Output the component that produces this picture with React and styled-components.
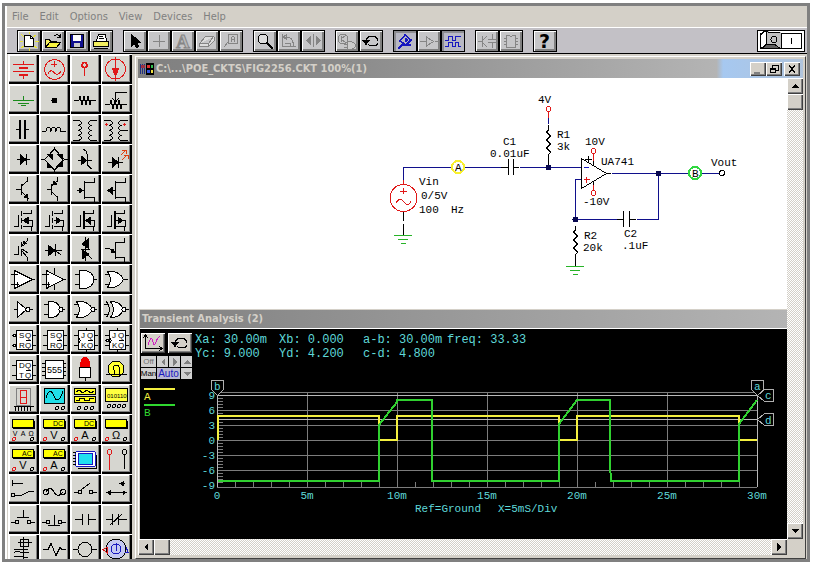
import React from "react";
import styled, { createGlobalStyle, css } from "styled-components";

const colors = {
    face: "#d4d0c8",
    tool: "#c3c1c6",
    dark: "#808080",
    red: "#e01818",
    green: "#1c8c1c",
    wire: "#10108c",
    blue: "#1818c0",
    cyan: "#5fd8d8",
    yellow: "#f4f040",
};

const fonts = {
    ui: `"DejaVu Sans Condensed", "DejaVu Sans", sans-serif`,
    mono: `"Liberation Mono", monospace`,
    small: `"Liberation Sans", sans-serif`,
};

const zig = "l1 -4l2 8l2 -8l2 8l2 -8l2 8l1 -4";

const T = ({ x, y, children, size = 8 }) => (
    <text x={x} y={y} fontSize={size} fill="#000" stroke="none">
        {children}
    </text>
);

const Solid = ({ d, c = "#000" }) => <path d={d} fill={c} stroke={c} />;

const JFet = ({ arrow }) => (
    <>
        <path d="M14.5 7v18M14.5 8.5h10v-5M14.5 23.5h10v4M7 16.5h7" />
        <Solid d={arrow} />
    </>
);

const Mosfet = ({ thick, arrow }) => (
    <>
        <path d="M6 22.5h4.500v-12M14.500 9.500h9v-4M14.500 22.500h9v4M15 16.500h9v6" />
        <path d={thick ? "M14 7v18" : "M13.500 7v5M13.500 14v5M13.500 21v4"} strokeWidth={thick ? 2 : 1} />
        <Solid d={arrow} />
    </>
);

const FlipFlop = ({ a, b, clock, inv }) => (
    <>
        <path d="M4 11.500h4M4 21.500h4M24 11.500h4M24 21.500h4" />
        <rect x="8.500" y="6.500" width="16" height="19" fill="#fff" />
        {clock && <path d="M8.500 14l2 2.500l-2 2.500M16.500 4v2M16.500 26v2" />}
        {inv && <circle cx="6.500" cy={clock ? 16.5 : 11.5} r="1.500" fill="#fff" />}
        {inv && !clock && <circle cx="6.500" cy="21.500" r="1.500" fill="#fff" />}
        <T x="11" y="14">{a}</T>
        <T x="17" y="14">Q</T>
        <T x="11" y="24">{b}</T>
        <T x="17" y="24">Q</T>
        <path d="M18 16.500h5" />
    </>
);

const Meter = ({ mode, units }) => (
    <>
        <rect x="4.500" y="5.500" width="21" height="8" fill="#ffff00" />
        <path d="M5 14.500h21.500v-8" />
        {mode && <T x="14" y="12" size="7">{mode}</T>}
        {units.map((u, i) => (
            <text
                key={u}
                x={units.length > 1 ? 7 + i * 8 : 15}
                y={units.length > 1 ? 22 : 25}
                fontSize={units.length > 1 ? 7 : 11}
                textAnchor="middle"
                fill="#000"
                stroke="none"
            >
                {u}
            </text>
        ))}
        <circle cx="6" cy="25" r="1.500" stroke={colors.red} />
        <circle cx="24" cy="25" r="1.500" />
    </>
);

const andBody = "M9.500 6.500h5q9 1 9 9t-9 9h-5z";
const orBody = "M6.500 7.500h5q8 1 11 8q-3 7 -11 8h-5q6 -8 0 -16z";

const parts = [
    ["Battery", <g stroke={colors.red}><path d="M15.500 7v3M5 10.500h21M5 17.500h21M15.500 22v3" /><path d="M11 14h9M11 21h9" strokeWidth="2" /></g>],
    ["AC source", <g stroke={colors.red}><circle cx="15.500" cy="15.500" r="10" /><path d="M12 10.500h6M15.500 7v6M9 19.500q3 -5 6 -1t7 -1" /></g>],
    ["Test pin", <g stroke={colors.red} strokeWidth="1.500"><circle cx="14.500" cy="11" r="2.500" /><path d="M14.500 13v9" /></g>],
    ["Current source", <g stroke={colors.red}><circle cx="14.500" cy="15" r="10" /><path d="M14.500 3v24" /><Solid d="M11 14h7l-3.500 8z" c={colors.red} /></g>],

    ["Ground", <path stroke={colors.green} d="M15.500 12v4M5 16.500h21M10 19.500h11M13 21.500h5" />],
    ["Node", <circle cx="15.500" cy="16.500" r="2.500" fill="#000" />],
    ["Resistor", <path d={`M4 16.500h5${zig}h5`} />],
    ["Potentiometer", <path d={`M4 20.500h5${zig}h5M26 8.500h-11.500v9M11 14l3.500 4l3.500 -4`} />],

    ["Capacitor", <><path d="M8 15.500h3M18 15.500h3" /><path d="M12 6v19M17 6v19" strokeWidth="2" /></>],
    ["Inductor", <path d="M3 17.500h4q0 -4 2.500 -4t2.500 4q0 -4 2.500 -4t2.500 4q0 -4 2.500 -4t2.500 4h5" />],
    ["Transformer", <path d="M3 6.500h6q5 2 0 5q5 2 0 5q5 2 0 5q5 2 0 5h-6M27 6.500h-6q-5 2 0 5q-5 2 0 5q-5 2 0 5q-5 2 0 5h6" />],
    ["Center tap transformer", <><path d="M3 6.500h6q5 2 0 5q5 2 0 5q5 2 0 5q5 2 0 5h-6M27 6.500h-7q-5 2 0 5q-5 2 0 5h7h-7q-5 2 0 5q-5 2 0 5h7" /><path stroke={colors.red} d="M4 10.500h3M5.500 9v3M22 10.500h3M23.500 9v3" /></>],

    ["Diode", <><path d="M9 15.500h13M18.500 10v11" /><Solid d="M12 10.500l6 5l-6 5z" /></>],
    ["Bridge", <><path d="M15.500 5l10 10.500l-10 10.500l-10 -10.500zM15.500 3v3M15.500 25v3M2 15.500h4M25 15.500h4" /><Solid d="M8 10l5 0l0 5zM18 10l5 0l0 5zM8 18l5 5l-5 0zM18 22l5 -5l0 5z" /></>],
    ["Zener diode", <><path d="M8 16.500h14M13 5q4 2 4 5v12M17.500 21l4 4" /><Solid d="M11 12l6 4.500l-6 4.500z" /></>],
    ["LED", <><path d="M7 18.500h15M17.500 13v11" /><Solid d="M11 13l6 5.500l-6 5z" /><path stroke="#e04010" d="M20 11l5 -5M21 6h4v4M21 16l5 -5M23 11h4v4" /></>],

    ["NPN transistor", <><path d="M8 15.500h5M13.500 10v11M13.500 12l6 -5v-4M13.500 18l6 5v4" /><Solid d="M20 24l-4 -1l3 -3z" /></>],
    ["PNP transistor", <><path d="M8 15.500h5M12.500 10v11M12.500 12l6 -5v-4M12.500 18l6 5v4" /><Solid d="M14 11l1 -4l3 3z" /></>],
    ["N JFET", <JFet arrow="M9 14l4 2.500l-4 2.500z" />],
    ["P JFET", <JFet arrow="M11 13.500l-4 3l4 3z" />],

    ["N MOSFET", <Mosfet arrow="M20 13.500l-5 3l5 3z" />],
    ["P MOSFET", <Mosfet arrow="M17 13.500l5 3l-5 3z" />],
    ["Depletion N MOSFET", <Mosfet thick arrow="M20 13.500l-4 3l4 3z" />],
    ["Depletion P MOSFET", <Mosfet thick arrow="M17 13.500l5 3l-5 3z" />],

    ["IGBT", <><path d="M6 20.500h4v-9M13.500 8v5M13.500 15v7M14 11l5 -4v-3M14 17l5 6v4M19 9l-5 3M14 15l6 4" /><Solid d="M15 10l1 -3l2 2z" /></>],
    ["SCR", <><path d="M6 16.500h17M16.500 10v12M17 17l5 4" /><Solid d="M9 11l7 5.500l-7 5.500z" /></>],
    ["Triac", <><path d="M11 15.500h9M15.500 3v24M17 20l5 5" /><Solid d="M18 5v9l-6 -4zM12 16v9l7 -5z" /></>],
    ["UJT", <><path d="M14.500 8v17M14.500 8.500h9v-5M14.500 23.500h9v4M4 14h4l6 5" /><Solid d="M14 19l-4 -1l2 -3z" /></>],

    ["Op amp", <><path d="M6.500 6.500v18l18 -9z" fill="#fff" /><path d="M3 10.500h7M3 20.500h8M9.500 18v5M24 15.500h3" /></>],
    ["Powered op amp", <><path d="M7.500 6.500v18l17 -9z" fill="#fff" /><path d="M3 10.500h7M3 20.500h8M9.500 18v5M24 15.500h3M15.500 4v6M15.500 20v6" /></>],
    ["AND", <><path d="M5 10.500h5M5 20.500h5M23 15.500h4" /><path d={andBody} fill="#fff" /></>],
    ["OR", <><path d={orBody} fill="#fff" /><path d="M4 10.500h5M4 20.500h5M22 15.500h5" /></>],

    ["Inverter", <><path d="M6 15.500h3M21 15.500h4" /><path d="M9.500 7.500v16l9 -8z" fill="#fff" /><circle cx="20" cy="15.500" r="2" fill="#fff" /></>],
    ["NAND", <><path d="M5 10.500h5M5 20.500h5M23 15.500h3" /><path d="M9.500 7.500h4q7 1 7 8t-7 8h-4z" fill="#fff" /><circle cx="22" cy="15.500" r="2" fill="#fff" /></>],
    ["NOR", <><path d={orBody} fill="#fff" /><path d="M4 10.500h5M4 20.500h5M24 15.500h3" /><circle cx="23" cy="15.500" r="2" fill="#fff" /></>],
    ["XNOR", <><path d="M5.500 7.500q6 8 0 16" /><path d="M9.500 7.500h3q7 1 10 8q-3 7 -10 8h-3q6 -8 0 -16z" fill="#fff" /><path d="M3 10.500h5M3 20.500h5M24 15.500h4" /><circle cx="23" cy="15.500" r="2" fill="#fff" /></>],

    ["SR flip flop inverted", <FlipFlop a="S" b="R" inv />],
    ["SR flip flop", <FlipFlop a="S" b="R" />],
    ["JK flip flop", <FlipFlop a="J" b="K" clock />],
    ["JK flip flop inverted", <FlipFlop a="J" b="K" clock inv />],

    ["D flip flop", <FlipFlop a="D" b="T" />],
    ["555 timer", <><path d="M3 9.500h24M3 13.500h24M3 17.500h24M3 21.500h24" /><rect x="6.500" y="6.500" width="18" height="18" fill="#fff" /><T x="8" y="19" size="9">555</T></>],
    ["Lamp", <><path d="M10.500 13q0 -9 4.500 -10q5 1 5 10z" fill="#f00000" stroke="#f00000" /><rect x="9.500" y="13.500" width="11" height="10" fill="#fff" /><path d="M15.500 24v3" /></>],
    ["Bulb", <><circle cx="15" cy="15" r="8" fill="#ffff30" /><path d="M5 20.500h21M13 20v-4q-2 -5 2 -5t3 5v4" /></>],

    ["Seven segment", <><rect x="8.500" y="4.500" width="14" height="17" stroke={colors.dark} /><path stroke={colors.red} d="M12.500 6.500h6v13h-6zM12.500 13h6" /><path d="M6 22.500h20M7.500 23v4M10.500 23v4M13.500 23v4M16.500 23v4M19.500 23v4M22.500 23v4" /></>],
    ["Oscilloscope", <><rect x="5.500" y="4.500" width="20" height="15" fill="#20e0e8" /><path d="M7 14q4 -12 8 -2t9 -5" /><circle cx="18" cy="24" r="1.500" /><circle cx="24" cy="24" r="1.500" /></>],
    ["Function generator", <><rect x="4.500" y="4.500" width="21" height="6" fill="#ffff20" /><rect x="4.500" y="12.500" width="21" height="6" fill="#ffff20" /><path d="M6 8l3 -2l4 3l4 -3l4 3l3 -2M6 16.500h3v-2h5v2h5v-2h5" /><circle cx="9" cy="24" r="1.500" /><circle cx="16" cy="24" r="1.500" /><circle cx="22" cy="24" r="1.500" /></>],
    ["Data sequencer", <><rect x="4.500" y="4.500" width="22" height="13" fill="#ffff40" /><T x="6" y="14" size="6">010110</T><circle cx="8" cy="22" r="1.500" /><circle cx="13" cy="22" r="1.500" /><circle cx="18" cy="22" r="1.500" /><circle cx="23" cy="22" r="1.500" /></>],

    ["Multimeter", <Meter units={["V", "A", "Ω"]} />],
    ["DC voltmeter", <Meter mode="DC" units={["V"]} />],
    ["DC ammeter", <Meter mode="DC" units={["A"]} />],
    ["Ohmmeter", <Meter units={["Ω"]} />],

    ["AC voltmeter", <Meter mode="AC" units={["V"]} />],
    ["AC ammeter", <Meter mode="AC" units={["A"]} />],
    ["Display", <><rect x="5.500" y="7.500" width="20" height="15" rx="2" fill="#fff" stroke={colors.blue} /><rect x="8.500" y="9.500" width="14" height="11" fill="#20e0f0" stroke={colors.blue} /><path d="M8 24.500h18v-14M3 8.500h3M3 11.500h3M3 14.500h3M3 17.500h3M3 20.500h3" /></>],
    ["Probes", <><g stroke={colors.red}><circle cx="8.500" cy="8" r="2.500" /><path d="M8.500 10v16" /></g><circle cx="23.500" cy="8" r="2.500" /><path d="M23.500 10v15" /></>],

    ["Fused switch", <path d="M4.500 6v6M5 9.500h10M7 21.500h6l8 -4h5M3 21a2 2 0 1 0 4 0a2 2 0 1 0 -4 0" />],
    ["Fuse", <><circle cx="7" cy="18" r="2.500" /><circle cx="24" cy="18" r="2.500" /><path d="M7 18q4 -7 8 0t9 0" /></>],
    ["Switch", <><circle cx="10" cy="18" r="2" /><circle cx="21" cy="18" r="2" /><path d="M4 18.500h4M23 18.500h4M11 16l9 -7" /></>],
    ["Changeover switch", <><path d="M5 18.500h21M19 9.500h5" /><Solid d="M9 17l-3 1.500l3 2zM22 17l3 1.500l-3 2zM22 8l-3 1.500l3 2z" /></>],

    ["Push button", <><circle cx="9" cy="18" r="2" /><circle cx="21" cy="18" r="2" /><path d="M3 18.500h4M23 18.500h4M9 13.500h12M15.500 6v7" /></>],
    ["Closed push button", <><circle cx="9" cy="18" r="2" /><circle cx="21" cy="18" r="2" /><path d="M3 18.500h4M23 18.500h4M9 21.500h12M15.500 11v10" /></>],
    ["Relay contact", <path d="M5 15.500h7M19 15.500h7M12.500 10v11M18.500 10v11" />],
    ["Closed relay contact", <path d="M5 15.500h7M18 15.500h8M11.500 10v11M17.500 10v11M9 21l12 -11" />],

    ["Relay", <><rect x="12.500" y="5.500" width="8" height="7" /><path d="M15.500 3v22M10 8.500h14M6 15.500h14M6 18.500q4 -3 7 0h8M6 22.500h6l8 1" /></>],
    ["Wire wound resistor", <path d="M4 15.500h5l3 -6l5 12l4 -8l2 2h4" />],
    ["Lamp outline", <><circle cx="15" cy="15.500" r="7" /><path d="M3 15.500h5M22 15.500h5" /></>],
    ["Motor", <><circle cx="15" cy="15" r="10" fill="#c4c8f0" /><circle cx="15" cy="15" r="5" stroke={colors.blue} /><path stroke={colors.blue} d="M15.500 9v8M25 13l2 5h-3" /><path stroke={colors.red} d="M2 15.500l4 -2v5z" /></>],
];

const off = "#858585";
const Rotate = () => (
    <>
        <path d="M7 11q1 -5 6 -5t6 5t-6 5q-3 0 -4 -2" />
        <Solid d="M4 10.500h6l-3 4z" />
    </>
);

const toolGroups = [
    [
        ["New", <><path stroke="#e8e430" d="M4 4l3 3M12 2v2M19 5l-3 2M3 11h3M18 11h4M4 18l3 -2M12 18v3M20 18l-3 -2" /><path d="M7.500 5.500h6l3 3v8h-9z" fill="#fff" /><path d="M13.500 5.500v3h3" /></>],
        ["Open", <><path d="M4.500 17.500v-8h4l1 2h6v2z" fill="#f4f060" /><path d="M13 6q4 -3 6 1M19 4v3h-3" /><path d="M4.500 17.500l4 -5h11l-4 5z" fill="#f8f440" /></>],
        ["Save", <><rect x="5.500" y="4.500" width="13" height="13" fill="#101090" /><rect x="8" y="5" width="8" height="6" fill="#fff" stroke="none" /><rect x="9" y="13" width="6" height="4" fill="#ccc" stroke="none" /></>],
        ["Print", <><path d="M7.500 11l2 -7h7l1 7z" fill="#fff" /><path d="M10 6.500h4M10 8.500h5" /><path d="M4.500 11.500h15v5h-15z" fill="#f4f060" /><path d="M5 18.500h14" /></>],
    ],
    [
        ["Select", <Solid d="M8.500 4.500v12l3 -3l2 4l2 -1l-2 -4h4z" />],
        ["Wire", <path stroke={off} d="M6 11.500h12M12.500 5v12" />, true],
        ["Text", <text x="5" y="18" fontSize="19" fontFamily="Liberation Serif, serif" fontWeight="bold" fill="#b8b8b8" stroke={off}>A</text>, true],
        ["Erase", <path stroke={off} fill="#ddd" d="M4.500 13.500l6 -7h8l-5 7zM4.500 13.500v3h9l6 -6v-4M13.500 13.500v3" />, true],
        ["Label", <><rect x="9.500" y="4.500" width="9" height="9" stroke={off} /><path stroke={off} d="M9 12l-4 5M12.500 12v-4q1.500 -3 3 0v4M12.500 9.500h3" /></>, true],
    ],
    [
        ["Zoom", <><circle cx="10" cy="9" r="5" fill="#ddd" /><path d="M14 13l6 6" strokeWidth="2.500" /></>],
        ["Rotate part", <path stroke={off} d="M5.500 4v13M5 16.500h14M8 7.500q7 -1 8 5v4M8 13.500h5v3M6 7l3 -2v4z" />, true],
        ["Mirror", <><path stroke={off} d="M12.500 4v13" /><Solid c={off} d="M9.500 7v7l-4 -3.500zM15.500 7v7l4 -3.500z" /></>, true],
    ],
    [
        ["Digital analog", <g stroke={off}><circle cx="8" cy="9" r="5" /><path d="M6 6v6M6 9l5 -4M6 9l5 4" /><path d="M12.500 11.500h3q5 1 5 4t-5 4h-3z" fill="#ccc" /><path d="M9 14h3M9 17h3" /></g>, true],
        ["Reset", <Rotate />],
    ],
    [
        ["Probe", <g stroke={colors.blue}><path d="M5 19l4 -4M12 5l6 5l-5 5l-6 -4zM8 15h10" strokeWidth="1.500" /><path d="M12 8l3 2l-3 2z" fill={colors.blue} /></g>, false, true],
        ["Trace", <path stroke={off} d="M3 11.500h6M9.500 7v9l7 -4.500zM18 11.500h4" />, true],
        ["Waveforms", <path stroke={colors.blue} d="M4 10.500h3v-4h4v4h3v-4h6M4 16.500h3v-4h4v4h3v-4h3v4h3" />, false, true],
    ],
    [
        ["Analog parts", <path stroke={off} d="M3 11.500h4M7.500 6v11M7 11l5 -5M7 12l5 5M17.500 4v5M13 9.500h8M13 12.500h8M17.500 13v5" />, true],
        ["Chips", <path stroke={off} d="M7.500 5.500h3q1 2 3 0h3v12h-9zM5 8.500h2M5 11.500h2M5 14.500h2M17 8.500h2M17 11.500h2M17 14.500h2" />, true],
    ],
    [["Help", <text x="6" y="18" fontSize="19" fontFamily="DejaVu Sans, sans-serif" fontWeight="bold" fill="#000" stroke="none">?</text>]],
];

const menus = ["File", "Edit", "Options", "View", "Devices", "Help"];

const Schematic = () => (
    <SchematicSvg viewBox="138 78 649 230" width="649" height="230" role="img" aria-label="Circuit schematic">
        <g stroke={colors.wire}>
            <path d="M403.500 181v-13.500h48M464 167.500h37M520 167.500h61M548.500 118v6M581 179.500h-5.500v40h42M637 219.500h21.500v-46M612 173.500h77M701 173.500h18" />
        </g>
        <g stroke="#000">
            <path d="M403.500 212v9M403.500 224v11M501 167.500h7M514 167.500h5M508.500 159v16M513.500 159v16" />
            <path d="M548.500 125v5l-2 2l4 4l-4 4l4 4l-4 4l4 4l-2 3v14" />
            <path d="M575.500 226v4l-2 2l4 4l-4 4l4 4l-4 4l4 4l-2 3v12" />
            <path d="M581.500 158.500v30l25 -15zM606 173.500h5M588.500 156v7M585 159.500h7M593.500 161v5M593.500 181v4" />
            <path d="M617 219.500h7M630 219.500h6M623.500 211v16M629.500 211v16" />
            <circle cx="722" cy="173" r="2.500" fill="#fff" />
        </g>
        <g stroke={colors.red}>
            <circle cx="403.500" cy="198" r="13.500" />
            <path d="M403.500 180v4M403.500 188v6M400 191.500h7M396 203q4 -7 8 -1t7 -1" />
            <circle cx="548.500" cy="109" r="2.500" />
            <circle cx="593.500" cy="151" r="2.500" />
            <circle cx="593.500" cy="193" r="2.500" />
            <path d="M548.500 112v6M593.500 154v7M593.500 185v5M586.500 177v6M584 179.500h6" />
        </g>
        <path stroke={colors.blue} d="M584 167.500h5" />
        <path stroke="#28b428" d="M394 235.500h18M398 239.500h10M401 243.500h5M566 266.500h18M570 270.500h10M573 274.500h5" />
        <g fill="#080850">
            <circle cx="548.500" cy="167.500" r="3" />
            <circle cx="575.500" cy="219.500" r="3" />
            <circle cx="658.500" cy="173.500" r="3" />
        </g>
        <circle cx="458" cy="167" r="6" fill="#fff" stroke="#f8f030" strokeWidth="2" />
        <circle cx="695" cy="173" r="6" fill="#fff" stroke="#30d840" strokeWidth="2" />
        <g fill="#000" stroke="none">
            <text x="455" y="171">A</text>
            <text x="692" y="177">B</text>
            <text x="538" y="103">4V</text>
            <text x="557" y="138">R1</text>
            <text x="557" y="150">3k</text>
            <text x="503" y="145">C1</text>
            <text x="490" y="157">0.01uF</text>
            <text x="419" y="185">Vin</text>
            <text x="421" y="199">0/5V</text>
            <text x="419" y="213">100</text>
            <text x="451" y="213">Hz</text>
            <text x="585" y="145">10V</text>
            <text x="583" y="205">-10V</text>
            <text x="601" y="165">UA741</text>
            <text x="711" y="166">Vout</text>
            <text x="584" y="239">R2</text>
            <text x="583" y="251">20k</text>
            <text x="624" y="237">C2</text>
            <text x="622" y="249">.1uF</text>
        </g>
    </SchematicSvg>
);

const range = (n) => Array.from({ length: n }, (_, i) => i);

const Plot = () => (
    <PlotSvg viewBox="195 361 592 170" width="592" height="170" role="img" aria-label="Transient response">
        <g stroke="#7c7c7c">
            {[392, 410, 425, 440, 455, 470, 487].map((y) => (
                <path key={y} d={`M217 ${y + 0.5}h540`} />
            ))}
            {range(5).map((i) => (
                <path key={i} d={`M${307.5 + i * 90} 392v95`} />
            ))}
            {range(30).map((i) => (
                <path key={i} d={`M217 ${395.5 + i * 3}h6`} />
            ))}
            {range(30).map((i) => (
                <path key={i} d={`M${217.5 + i * 18} 482v5`} />
            ))}
        </g>
        <path stroke="#b8b8b8" d="M217 395.500h540M217 419.500h540M217.500 395v92M757.500 395v92" />
        <path stroke={colors.yellow} strokeWidth="2" d="M218 440v-24h161v24h18v-24h162v24h18v-24h162v24h18" />
        <path stroke="#30d030" strokeWidth="2" d="M218 481h161v-56l18 -23v-2h35v81h127v-57l18 -24h33v65l1 16h128v-57l18 -24" />
        <g stroke="#b0b0b0" fill="#000">
            <path d="M211.500 380.500h12v9l-6 6l-6 -6zM751.500 380.500h12v9l-6 6l-6 -6z" />
            <path d="M757.500 395.500l7 -6h9v12h-9zM757.500 419.500l7 -6h9v12h-9z" />
        </g>
        <g fill={colors.cyan} stroke="none">
            <text x="214" y="390">b</text>
            <text x="754" y="390">a</text>
            <text x="765" y="399">c</text>
            <text x="765" y="424">d</text>
            {[9, 6, 3, 0, -3, -6, -9].map((v) => (
                <text key={v} x="215" y={444 - v * 5} textAnchor="end">{v}</text>
            ))}
            {["0", "5m", "10m", "15m", "20m", "25m", "30m"].map((v, i) => (
                <text key={v} x={217 + i * 90} y="499" textAnchor="middle">{v}</text>
            ))}
            <text x="415" y="512">Ref=Ground</text>
            <text x="498" y="512">X=5mS/Div</text>
        </g>
    </PlotSvg>
);

const readouts = [
    ["Xa: 30.00m", "Xb: 0.000", "a-b: 30.00m", "freq: 33.33"],
    ["Yc: 9.000", "Yd: 4.200", "c-d: 4.800", ""],
];

const Arrow = ({ dir }) => (
    <ArrowSvg viewBox="0 0 8 8" $dir={dir}>
        <path d="M0 6h8l-4 -4z" />
    </ArrowSvg>
);

export default function App() {
    return (
        <Page>
            <GlobalStyle />
            <Frame>
                <MenuBar>
                    {menus.map((m) => (
                        <MenuItem key={m}>{m}</MenuItem>
                    ))}
                </MenuBar>
                <Toolbar>
                    {toolGroups.map((group, i) => (
                        <ToolGroup key={i}>
                            {group.map(([name, art, disabled, pressed]) => (
                                <ToolButton key={name} aria-label={name} disabled={disabled} $pressed={pressed}>
                                    <ToolArt viewBox="0 0 24 22">{art}</ToolArt>
                                </ToolButton>
                            ))}
                        </ToolGroup>
                    ))}
                    <PowerSwitch aria-label="Simulation power">
                        <svg width="48" height="22" viewBox="0 0 48 22" fill="none" stroke="#000">
                            <rect x="3.500" y="3.500" width="41" height="15" />
                            <path d="M4 5l5 -4q8 2 15 1v17h-20z" fill="#c0c0c0" stroke="none" />
                            <path d="M3.500 18v-13l4 -4h2v13l-5 4z" fill="#fff" />
                            <path d="M5 18.500l4 -4h9l5 4z" fill="#606060" />
                            <path d="M8 1.500q8 2 15 1M24.500 3v15M34.500 8v6" />
                            <circle cx="17" cy="9.500" r="3" />
                        </svg>
                    </PowerSwitch>
                </Toolbar>
                <Workspace>
                    <Palette>
                        {parts.map(([name, art]) => (
                            <Tile key={name} aria-label={name}>
                                <TileArt viewBox="0 0 31 30">{art}</TileArt>
                            </Tile>
                        ))}
                    </Palette>
                    <Mdi>
                        <TitleBar>
                            <svg width="16" height="14" viewBox="0 0 16 14">
                                <path d="M1 2h1v10h-1zM3 2h1v10h-1zM5 2h1v10h-1z" fill="#203080" />
                                <path d="M2 3h4v3h-4z" fill="#a03040" />
                                <path d="M7 1h8v12h-8z" fill="#000" />
                                <path d="M8 3h3v3h-3z" fill="#e03030" />
                                <path d="M12 3h2v3h-2z" fill="#30c050" />
                                <path d="M8 8h3v3h-3z" fill="#3050e0" />
                                <path d="M12 8h2v3h-2z" fill="#f0e040" />
                            </svg>
                            <TitleText>C:\...\POE_CKTS\FIG2256.CKT 100%(1)</TitleText>
                            <WindowButtons>
                                <WindowButton aria-label="Minimize">
                                    <svg viewBox="0 0 14 12"><path d="M3 9.500h6" stroke="#808080" strokeWidth="2" /></svg>
                                </WindowButton>
                                <WindowButton aria-label="Restore">
                                    <svg viewBox="0 0 14 12"><path d="M5.500 5v-3h6v5h-3M5 2.500h7M3.500 5.500h5v4h-5zM3 6h6" stroke="#000" fill="none" /></svg>
                                </WindowButton>
                                <WindowButton aria-label="Close" $apart>
                                    <svg viewBox="0 0 14 12"><path d="M4 2.500l6 7M10 2.500l-6 7" stroke="#000" strokeWidth="1.500" /></svg>
                                </WindowButton>
                            </WindowButtons>
                        </TitleBar>
                        <Scroller>
                            <Content>
                                <Schematic />
                                <Analysis>
                                    <AnalysisTitle>Transient Analysis (2)</AnalysisTitle>
                                    <AnalysisBody>
                                        <Side>
                                            <Controls>
                                                <BigControl aria-label="Scale">
                                                    <svg width="22" height="18" viewBox="0 0 22 18" fill="none">
                                                        <path d="M3.500 15v-13M1 4l2.500 -3l2.500 3M3 14.500h16M17 12l3 2.500l-3 2.500" stroke="#000" />
                                                        <path d="M6 11q3 -11 5 -3q1 6 3 0t4 -5" stroke="#d020c0" />
                                                    </svg>
                                                </BigControl>
                                                <BigControl aria-label="Reset">
                                                    <svg width="22" height="18" viewBox="1 2 22 18" fill="none" stroke="#000"><Rotate /></svg>
                                                </BigControl>
                                            </Controls>
                                            <MiniGrid>
                                                <Mini $dim>Off</Mini>
                                                <Mini aria-label="Left"><Arrow dir={-90} /></Mini>
                                                <Mini aria-label="Right"><Arrow dir={90} /></Mini>
                                                <Mini aria-label="Up"><Arrow dir={0} /></Mini>
                                                <Mini>Man</Mini>
                                                <Mini $auto>Auto</Mini>
                                                <Mini aria-label="Down"><Arrow dir={180} /></Mini>
                                            </MiniGrid>
                                            <Legend $color={colors.yellow}>A</Legend>
                                            <Legend $color="#30d830">B</Legend>
                                        </Side>
                                        <div>
                                            <Readouts>
                                                {readouts.flat().map((r, i) => (
                                                    <span key={i}>{r}</span>
                                                ))}
                                            </Readouts>
                                            <Plot />
                                        </div>
                                    </AnalysisBody>
                                </Analysis>
                            </Content>
                            <VScroll>
                                <ScrollButton aria-label="Scroll up"><Arrow dir={0} /></ScrollButton>
                                <Thumb />
                                <Track />
                                <ScrollButton aria-label="Scroll down"><Arrow dir={180} /></ScrollButton>
                            </VScroll>
                            <HScroll>
                                <ScrollButton aria-label="Scroll left"><Arrow dir={-90} /></ScrollButton>
                                <Thumb />
                                <Track />
                                <ScrollButton aria-label="Scroll right"><Arrow dir={90} /></ScrollButton>
                            </HScroll>
                        </Scroller>
                    </Mdi>
                </Workspace>
            </Frame>
        </Page>
    );
}

const GlobalStyle = createGlobalStyle`
    * {
        box-sizing: border-box;
    }
    body {
        margin: 0;
        background: #fff;
        font-family: ${fonts.ui};
        font-size: 11px;
    }
    button {
        font: inherit;
        color: inherit;
        padding: 0;
        border: 0;
        background: none;
    }
    svg {
        display: block;
        shape-rendering: crispEdges;
    }
`;

const raised = css`
    background: ${colors.face};
    box-shadow: inset 1px 1px #fff, inset -1px -1px #404040, inset -2px -2px ${colors.dark};
`;

const Page = styled.div`
    height: 100vh;
    padding: 3px 3px 1px 2px;
`;

const Frame = styled.main`
    height: 100%;
    display: flex;
    flex-direction: column;
    overflow: hidden;
    background: ${colors.face};
    border: 3px solid ${colors.dark};
    box-shadow: inset 2px 0 #fff;
`;

const MenuBar = styled.nav`
    flex: none;
    height: 21px;
    padding: 0 7px;
    display: flex;
    align-items: center;
    gap: 11px;
    color: ${colors.dark};
`;

const MenuItem = styled.button`
    line-height: 14px;
`;

const Toolbar = styled.div`
    flex: none;
    height: 27px;
    margin-left: 2px;
    padding: 0 2px 0 10px;
    display: flex;
    align-items: center;
    gap: 10px;
    background: ${colors.tool};
    border-top: 1px solid #fff;
    border-bottom: 1px solid #000;
`;

const ToolGroup = styled.div`
    display: flex;
`;

const ToolButton = styled.button`
    width: 24px;
    height: 22px;
    background: ${(props) => (props.$pressed ? "#b8b8c4" : "#c6c6c8")};
    box-shadow: ${(props) =>
        props.$pressed
            ? "inset 0 0 0 1px #000, inset 3px 3px #8c8c90"
            : "inset 0 0 0 1px #000, inset 2px 2px #fff, inset -3px -3px #808080"};
`;

const ToolArt = styled.svg`
    width: 24px;
    height: 22px;
    fill: none;
    stroke: #000;
`;

const PowerSwitch = styled.button`
    width: 48px;
    height: 22px;
    margin-left: auto;
    background: #fff;
    box-shadow: inset 0 0 0 1px #000;
`;

const Workspace = styled.div`
    flex: 1;
    min-height: 0;
    display: flex;
`;

const Palette = styled.div`
    flex: none;
    margin-left: 3px;
    display: grid;
    grid-template-columns: repeat(4, 31px);
    grid-auto-rows: 30px;
    align-content: start;
    overflow: hidden;
`;

const Tile = styled.button`
    background: #d6d6d0;
    box-shadow: inset 1px 1px #fff, inset -2px -2px #000, inset -3px -3px ${colors.dark}, inset 2px 2px #fff;
`;

const TileArt = styled.svg`
    width: 31px;
    height: 30px;
    fill: none;
    stroke: #000;
    font-family: ${fonts.small};
`;

const Mdi = styled.section`
    flex: 1;
    min-width: 0;
    margin: 2px 1px 0 3px;
    padding: 2px 2px 3px;
    display: flex;
    flex-direction: column;
    background: ${colors.face};
    border-top: 1px solid #fff;
    border-left: 1px solid #fff;
    border-right: 1px solid #404040;
    border-bottom: 1px solid #404040;
`;

const TitleBar = styled.header`
    flex: none;
    height: 19px;
    padding: 0 3px 0 1px;
    display: flex;
    align-items: center;
    gap: 1px;
    background: linear-gradient(90deg, #808080 0%, #8a8a8a 30%, #b4b4b4 87%, #a6c8f0 88%, #b0c4dc 100%);
`;

const TitleText = styled.h1`
    margin: 0;
    font-size: 11px;
    font-weight: bold;
    color: ${colors.face};
`;

const WindowButtons = styled.div`
    margin-left: auto;
    display: flex;
`;

const WindowButton = styled.button`
    ${raised}
    width: 16px;
    height: 14px;
    padding: 1px;
    margin-left: ${(props) => (props.$apart ? "2px" : 0)};
`;

const Scroller = styled.div`
    flex: 1;
    min-height: 0;
    display: grid;
    grid-template-columns: 1fr 16px;
    grid-template-rows: 1fr 16px;
`;

const Content = styled.div`
    min-width: 0;
    min-height: 0;
    display: flex;
    flex-direction: column;
    overflow: hidden;
    background: #fff;
`;

const SchematicSvg = styled.svg`
    flex: none;
    fill: none;
    font-family: ${fonts.mono};
    font-size: 11px;
`;

const Analysis = styled.section`
    flex: 1;
    margin-left: 1px;
    padding-left: 1px;
    display: flex;
    flex-direction: column;
    background: ${colors.face};
    border-top: 1px solid #fff;
`;

const AnalysisTitle = styled.h2`
    margin: 1px 0 0;
    padding: 0 2px;
    font-size: 11px;
    line-height: 18px;
    color: ${colors.face};
    background: linear-gradient(90deg, #808080, #b4b4b4);
    border-bottom: 1px solid #fff;
`;

const AnalysisBody = styled.div`
    flex: 1;
    padding: 4px 0 0 1px;
    display: grid;
    grid-template-columns: 54px 1fr;
    background: #000;
`;

const Side = styled.div`
    width: 51px;
`;

const Controls = styled.div`
    display: flex;
    justify-content: space-between;
`;

const BigControl = styled.button`
    ${raised}
    width: 24px;
    height: 20px;
    padding: 1px;
`;

const MiniGrid = styled.div`
    margin: 3px 0 9px;
    display: grid;
    grid-template-columns: 15px 11px 11px 11px;
    grid-auto-rows: 11px;
    gap: 1px;
`;

const Mini = styled.button`
    display: flex;
    align-items: center;
    justify-content: center;
    overflow: hidden;
    font-family: ${fonts.small};
    font-size: ${(props) => (props.$auto ? "10px" : "8px")};
    line-height: 11px;
    grid-column: ${(props) => (props.$auto ? "span 2" : "auto")};
    color: ${(props) => (props.$auto ? colors.blue : props.$dim ? "#707070" : "#000")};
    background: ${(props) => (props.$auto ? "#b8b8d0" : "#d0d0d0")};
    svg {
        fill: ${colors.dark};
    }
`;

const Legend = styled.div`
    width: 31px;
    height: 14px;
    margin: 0 0 2px 3px;
    padding-top: 1px;
    border-top: 2px solid ${(props) => props.$color};
    color: ${(props) => props.$color};
    font: 11px/12px ${fonts.mono};
`;

const Readouts = styled.div`
    display: grid;
    grid-template-columns: 84px 84px 84px auto;
    font: 12px/14px ${fonts.mono};
    color: ${colors.cyan};
    white-space: pre;
`;

const PlotSvg = styled.svg`
    fill: none;
    font-family: ${fonts.mono};
    font-size: 11px;
`;

const ArrowSvg = styled.svg`
    width: 8px;
    height: 8px;
    transform: rotate(${(props) => props.$dir}deg);
`;

const VScroll = styled.div`
    display: flex;
    flex-direction: column;
`;

const HScroll = styled.div`
    display: flex;
`;

const ScrollButton = styled.button`
    ${raised}
    flex: none;
    width: 16px;
    height: 16px;
    display: flex;
    align-items: center;
    justify-content: center;
`;

const Thumb = styled.div`
    ${raised}
    flex: none;
    width: 16px;
    height: 16px;
`;

const Track = styled.div`
    flex: 1;
    background: repeating-conic-gradient(#fff 0 25%, ${colors.face} 0 50%) 0 0 / 2px 2px;
`;
